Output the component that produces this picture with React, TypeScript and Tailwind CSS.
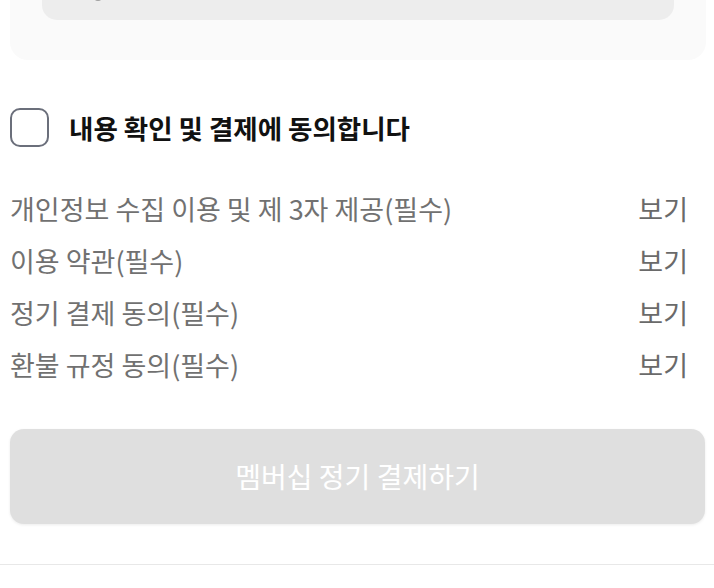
const terms = [
  "개인정보 수집 이용 및 제 3자 제공(필수)",
  "이용 약관(필수)",
  "정기 결제 동의(필수)",
  "환불 규정 동의(필수)",
];

export default function App() {
  return (
    <div
      className="w-[714px] h-[588px] overflow-hidden bg-white"
      style={{ fontFamily: '"Noto Sans CJK KR", "Noto Sans", sans-serif' }}
    >
      <div className="pl-[10px] pr-[8px]">
        {/* summary card, top cut off */}
        <div className="-mt-[60px] bg-[#fafafa] rounded-[18px] px-[32px] pb-[40px] pt-[20px]">
          <div className="relative h-[60px] bg-[#ededed] rounded-[15px]">
            <div className="absolute left-[52px] bottom-[19px] w-[8px] h-[8px] rounded-full bg-[#a0a0a0]" />
          </div>
        </div>

        {/* agree all */}
        <div className="mt-[48px] flex items-center gap-[20px]">
          <div className="w-[39px] h-[39px] rounded-[10px] border-2 border-[#6b6f7b] bg-white" />
          <span className="text-[26.5px] font-bold text-[#111]">
            내용 확인 및 결제에 동의합니다
          </span>
        </div>

        {/* term rows */}
        <div className="mt-[35px] pr-[18px]">
          {terms.map((t) => (
            <div key={t} className="h-[52px] flex items-center justify-between">
              <span className="text-[27px] text-[#717171]">{t}</span>
              <span className="text-[27px] text-[#6a6a6a]">보기</span>
            </div>
          ))}
        </div>

        <button className="mt-[38px] w-[695px] h-[95px] rounded-[14px] bg-[#dfdfdf] shadow-[0_1px_3px_rgba(0,0,0,0.08)] flex items-center justify-center">
          <span className="text-[28px] text-white">멤버십 정기 결제하기</span>
        </button>
      </div>

      <div className="mt-[40px] border-t border-[#e8e8e8] shadow-[0_1px_2px_rgba(0,0,0,0.04)] h-[30px] bg-white" />
    </div>
  );
}
